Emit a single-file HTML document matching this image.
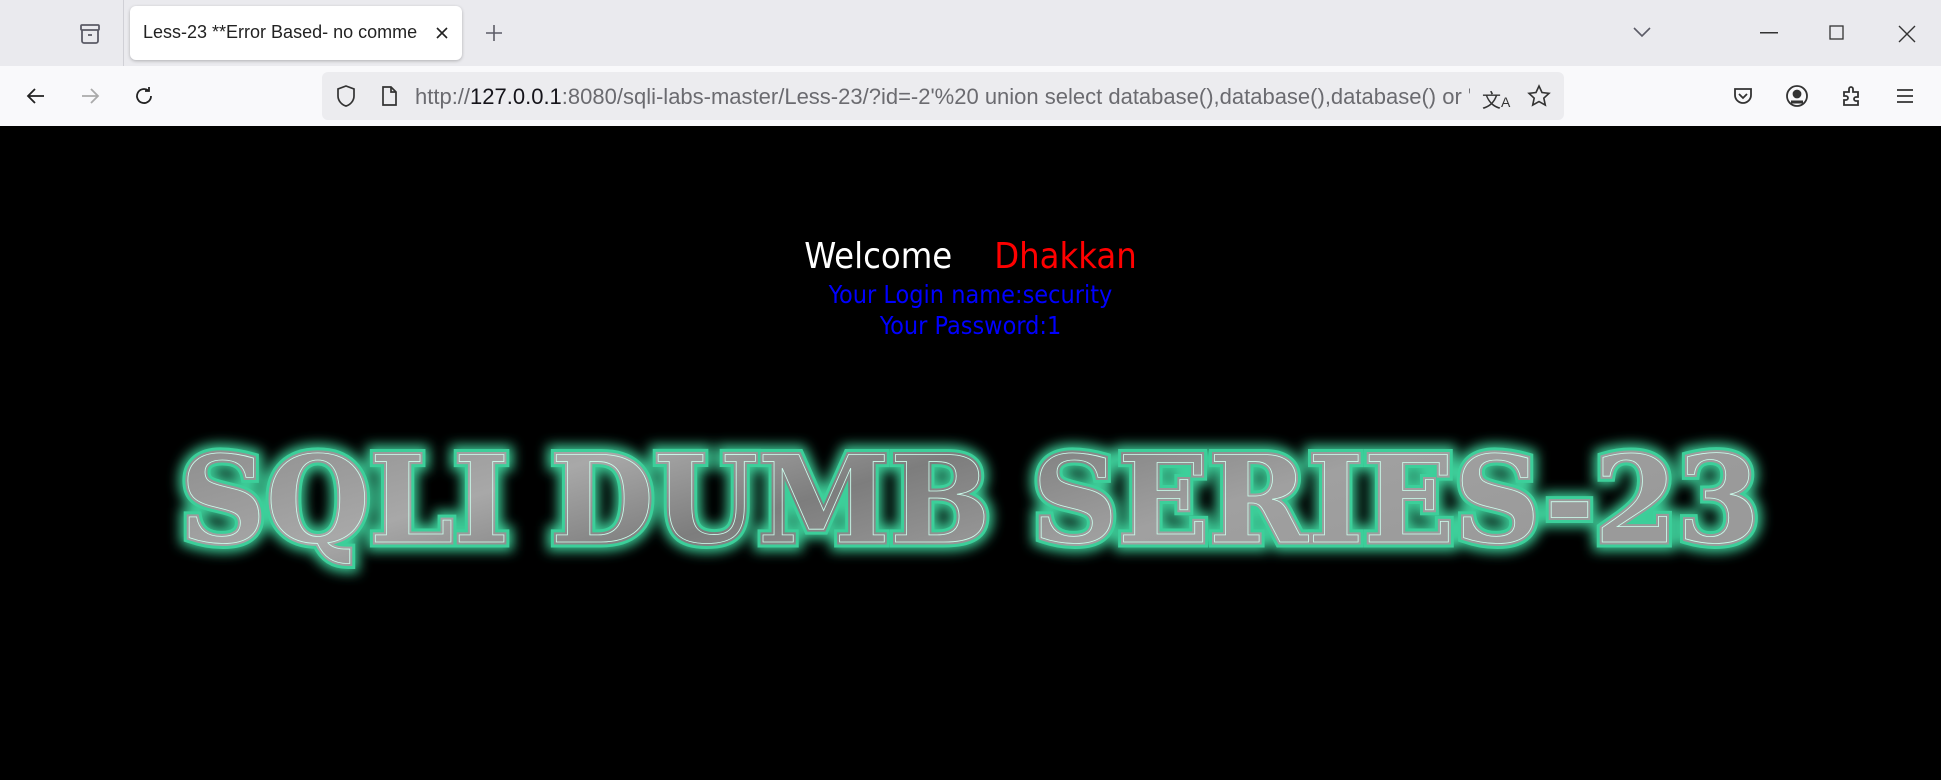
<!DOCTYPE html>
<html><head><meta charset="utf-8"><style>
html,body{margin:0;padding:0;width:1941px;height:780px;overflow:hidden;background:#000;font-family:"Liberation Sans",sans-serif}
.tabs{position:absolute;left:0;top:0;width:1941px;height:66px;background:#eaeaee}
.tab{position:absolute;left:130px;top:6px;width:332px;height:54px;background:#fff;border-radius:6px;box-shadow:0 1px 3px rgba(0,0,0,.25)}
.tab span{position:absolute;left:13px;top:16px;font-size:18px;color:#222;white-space:nowrap;width:285px;overflow:hidden}
.tool{position:absolute;left:0;top:66px;width:1941px;height:60px;background:#f9f9fb}
.url{position:absolute;left:322px;top:6px;width:1242px;height:48px;background:#ececef;border-radius:6px}
.url .t{position:absolute;left:93px;top:12px;font-size:22px;color:#6b6b70;white-space:nowrap;width:1055px;overflow:hidden}
.url .t b{font-weight:normal;color:#15141a}
svg.i{position:absolute}
.page{position:absolute;left:0;top:126px;width:1941px;height:654px;background:#000}
.w{position:absolute;top:110px;left:0;width:1941px;text-align:center;font-size:36px;color:#fff;font-family:"DejaVu Sans Condensed","Liberation Sans",sans-serif}
.b{position:absolute;left:0;width:1941px;text-align:center;font-size:25px;color:#0000ff;font-family:"DejaVu Sans Condensed","Liberation Sans",sans-serif}
</style></head><body>
<div class="tabs">
<svg class="i" style="left:78px;top:22px" width="24" height="24" viewBox="0 0 24 24" fill="none" stroke="#5b5b66" stroke-width="1.8"><rect x="3" y="3" width="18" height="5" rx="1"/><path d="M4 8v11a2 2 0 0 0 2 2h12a2 2 0 0 0 2-2V8M10 13h4"/></svg>
<div style="position:absolute;left:123px;top:0;width:1px;height:66px;background:#d0d0d6"></div>
<div class="tab"><span>Less-23 **Error Based- no comme</span>
<svg class="i" style="left:304px;top:19px" width="16" height="16" viewBox="0 0 16 16" stroke="#222" stroke-width="1.6"><path d="M3 3l10 10M13 3L3 13"/></svg></div>
<svg class="i" style="left:484px;top:23px" width="20" height="20" viewBox="0 0 20 20" stroke="#5b5b66" stroke-width="1.6"><path d="M10 2v16M2 10h16"/></svg>
<svg class="i" style="left:1632px;top:25px" width="20" height="14" viewBox="0 0 20 14" fill="none" stroke="#5b5b66" stroke-width="1.6"><path d="M2 3l8 8 8-8"/></svg>
<svg class="i" style="left:1760px;top:32px" width="18" height="2"><rect width="18" height="1.5" fill="#333"/></svg>
<svg class="i" style="left:1829px;top:25px" width="16" height="16" fill="none" stroke="#333" stroke-width="1.3"><rect x="1" y="1" width="13" height="13"/></svg>
<svg class="i" style="left:1898px;top:25px" width="18" height="18" stroke="#333" stroke-width="1.4"><path d="M1 1l16 16M17 1L1 17"/></svg>
</div>
<div class="tool">
<svg class="i" style="left:24px;top:18px" width="24" height="24" viewBox="0 0 24 24" fill="none" stroke="#222" stroke-width="1.8"><path d="M20 12H5M11 5l-7 7 7 7"/></svg>
<svg class="i" style="left:78px;top:18px" width="24" height="24" viewBox="0 0 24 24" fill="none" stroke="#aaa" stroke-width="1.8"><path d="M4 12h15M13 5l7 7-7 7"/></svg>
<svg class="i" style="left:132px;top:18px" width="24" height="24" viewBox="0 0 24 24" fill="none" stroke="#222" stroke-width="1.8"><path d="M19 12a7 7 0 1 1-3-5.7"/><path d="M17 3v4h-4"/></svg>
<div class="url">
<svg class="i" style="left:13px;top:12px" width="22" height="24" viewBox="0 0 22 24" fill="none" stroke="#333" stroke-width="1.7"><path d="M11 2l8 3v7c0 5-4 9-8 10-4-1-8-5-8-10V5z"/></svg>
<svg class="i" style="left:58px;top:13px" width="18" height="22" viewBox="0 0 18 22" fill="none" stroke="#333" stroke-width="1.7"><path d="M3 2h8l5 5v13H3z"/><path d="M11 2v5h5" /></svg>
<div class="t">http://<b>127.0.0.1</b>:8080/sqli-labs-master/Less-23/?id=-2'%20 union select database(),database(),database() or '1'='1</div>
<div style="position:absolute;left:1160px;top:14px;font-size:19px;color:#333">文<span style="font-size:14px">A</span></div>
<svg class="i" style="left:1205px;top:12px" width="24" height="24" viewBox="0 0 24 24" fill="none" stroke="#333" stroke-width="1.6"><path d="M12 2l3 6.5 7 .8-5.2 4.8 1.5 7L12 17.6 5.7 21.1l1.5-7L2 9.3l7-.8z"/></svg>
</div>
<svg class="i" style="left:1731px;top:18px" width="24" height="24" viewBox="0 0 24 24" fill="none" stroke="#333" stroke-width="1.8"><path d="M4 5h16v6a8 8 0 0 1-16 0z"/><path d="M8 10l4 4 4-4"/></svg>
<svg class="i" style="left:1785px;top:18px" width="24" height="24" viewBox="0 0 24 24" fill="none" stroke="#333" stroke-width="1.8"><circle cx="12" cy="12" r="10"/><circle cx="12" cy="10" r="3.5" fill="#333"/><path d="M6 18h12" stroke-width="3"/></svg>
<svg class="i" style="left:1840px;top:18px" width="24" height="24" viewBox="0 0 24 24" fill="none" stroke="#333" stroke-width="1.8"><path d="M4 21v-5h2a2 2 0 0 0 0-4H4V8h5V5a2 2 0 0 1 4 0v3h5v5h-2a2 2 0 0 0 0 4h2v4z"/></svg>
<svg class="i" style="left:1894px;top:19px" width="22" height="22" viewBox="0 0 22 22" stroke="#333" stroke-width="1.8"><path d="M3 5h16M3 11h16M3 17h16"/></svg>
</div>
<div class="page">
<div class="w"><span>Welcome</span><span style="display:inline-block;width:42px"></span><span style="color:#ff0000">Dhakkan</span></div>
<div class="b" style="top:154px">Your Login name:security</div>
<div class="b" style="top:185px">Your Password:1</div>
<svg style="position:absolute;left:0;top:0" width="1941" height="654">
<defs>
<linearGradient id="g" x1="0" y1="0" x2="1" y2="0.3"><stop offset="0" stop-color="#8a8a8a"/><stop offset=".3" stop-color="#a8a8a8"/><stop offset=".5" stop-color="#7d7d7d"/><stop offset=".75" stop-color="#a0a0a0"/><stop offset="1" stop-color="#9a9a9a"/></linearGradient>
<filter id="f" x="-5%" y="-30%" width="110%" height="160%"><feGaussianBlur stdDeviation="6"/></filter>
</defs>
<g font-family="DejaVu Serif" font-weight="bold" font-size="120">
<text x="180" y="416" textLength="1580" lengthAdjust="spacingAndGlyphs" fill="#3ccf9a" stroke="#3ccf9a" stroke-width="18" filter="url(#f)">SQLI DUMB SERIES-23</text>
<text x="180" y="416" textLength="1580" lengthAdjust="spacingAndGlyphs" fill="#3ccf9a" stroke="#3ccf9a" stroke-width="11">SQLI DUMB SERIES-23</text>
<text x="180" y="416" textLength="1580" lengthAdjust="spacingAndGlyphs" fill="url(#g)" stroke="url(#g)" stroke-width="5">SQLI DUMB SERIES-23</text>
<text x="180" y="416" textLength="1580" lengthAdjust="spacingAndGlyphs" fill="url(#g)" stroke="#cfe" stroke-width="0.8">SQLI DUMB SERIES-23</text>
</g>
</svg>
</div>
</body></html>
